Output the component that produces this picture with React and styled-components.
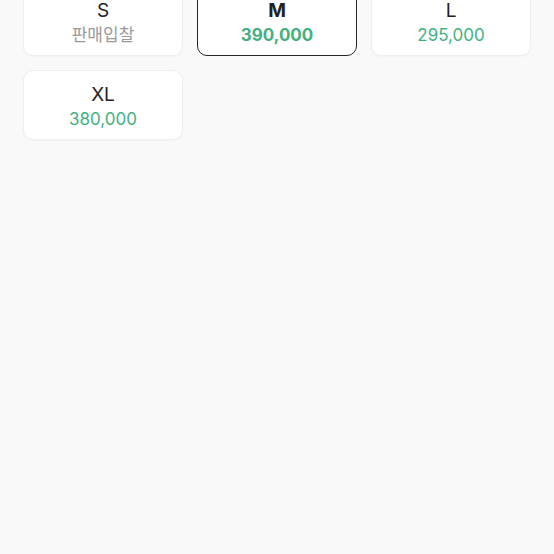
import React from "react";
import styled, { createGlobalStyle } from "styled-components";

const Global = createGlobalStyle`
  html, body { margin: 0; padding: 0; background: #f9f9f9; }
  body { font-family: Inter, "Noto Sans CJK KR", sans-serif; }
`;

const Page = styled.div`
  width: 554px;
  height: 554px;
  overflow: hidden;
  background: #f9f9f9;
`;

const Grid = styled.div`
  display: grid;
  grid-template-columns: repeat(3, 160px);
  grid-auto-rows: 70px;
  gap: 14px;
  padding: 0 23px;
  margin-top: -14px;
`;

const Card = styled.button`
  all: unset;
  box-sizing: border-box;
  display: flex;
  flex-direction: column;
  align-items: center;
  justify-content: center;
  background: #fff;
  border-radius: 10px;
  border: ${(p) => (p.$selected ? "1.6px solid #262626" : "1px solid #efefef")};
  box-shadow: ${(p) => (p.$selected ? "none" : "0 1px 2px rgba(0,0,0,0.03)")};
  padding-top: 4px;
`;

const Size = styled.span`
  font-size: 19px;
  line-height: 24px;
  color: #222;
  font-weight: ${(p) => (p.$bold ? 700 : 400)};
`;

const Price = styled.span`
  font-size: 17px;
  line-height: 24px;
  color: ${(p) => (p.$muted ? "#9a9a9a" : "#45b07f")};
  font-weight: ${(p) => (p.$bold ? 700 : 400)};
`;

const items = [
  { size: "S", price: "판매입찰", muted: true },
  { size: "M", price: "390,000", selected: true },
  { size: "L", price: "295,000" },
  { size: "XL", price: "380,000" },
];

export default function App() {
  return (
    <Page>
      <Global />
      <Grid>
        {items.map((it) => (
          <Card key={it.size} $selected={it.selected}>
            <Size $bold={it.selected}>{it.size}</Size>
            <Price $muted={it.muted} $bold={it.selected}>
              {it.price}
            </Price>
          </Card>
        ))}
      </Grid>
    </Page>
  );
}
